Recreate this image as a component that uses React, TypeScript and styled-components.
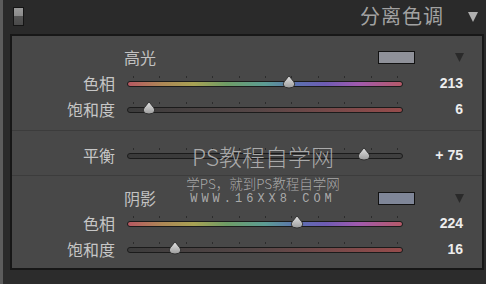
import React from "react"
import styled, { createGlobalStyle } from "styled-components"

const GlobalStyle = createGlobalStyle`
  html, body {
    margin: 0;
    padding: 0;
    background: #2a2a2a;
  }
  body {
    font-family: "Noto Sans CJK SC", "Noto Sans", sans-serif;
  }
`

const Frame = styled.div`
  position: relative;
  width: 483px;
  height: 284px;
  border-left: 3px solid #5c5c5c;
  background: #2a2a2a;
  display: flex;
  flex-direction: column;
  overflow: hidden;
`

const Header = styled.div`
  height: 34px;
  display: flex;
  align-items: center;
  padding: 0 7px 0 10px;
  box-sizing: border-box;
`

const Toggle = styled.div`
  width: 9px;
  height: 17px;
  border: 1px solid #151515;
  background: linear-gradient(#9a9a9a 0, #8a8a8a 50%, #555 50%, #4a4a4a 100%);
  margin-top: -1px;
`

const Title = styled.div`
  margin-left: auto;
  font-size: 20px;
  color: #a2a2a2;
  letter-spacing: 1px;
  line-height: 1;
  margin-top: -2px;
`

const Caret = styled.svg`
  display: block;
  margin-left: 24px;
  margin-right: 1px;
`

const Panel = styled.div`
  margin: 0 2px 0 7px;
  height: 236px;
  box-sizing: border-box;
  border: 2px solid #171717;
  background: #484848;
  display: flex;
  flex-direction: column;
`

const Section = styled.div<{ $top: number; $h: number; $last?: boolean }>`
  height: ${(p) => p.$h}px;
  box-sizing: border-box;
  padding-top: ${(p) => p.$top}px;
  border-bottom: ${(p) => (p.$last ? "none" : "1px solid #3c3c3c")};
`

const GroupHead = styled.div<{ $h: number }>`
  height: ${(p) => p.$h}px;
  display: flex;
  align-items: center;
  padding: 0 18px 0 112px;
`

const GroupName = styled.div`
  font-size: 16px;
  color: #c2c2c2;
  line-height: 1;
`

const Swatch = styled.div<{ $color: string }>`
  margin-left: auto;
  width: 35px;
  height: 11px;
  border: 1px solid #121212;
  background: ${(p) => p.$color};
`

const GroupCaret = styled.svg`
  display: block;
  margin-left: 40px;
`

const Row = styled.div`
  height: 26px;
  display: grid;
  grid-template-columns: 115px 276px 60px;
  align-items: center;
`

const Label = styled.div`
  text-align: right;
  padding-right: 12px;
  font-size: 16px;
  color: #c6c6c6;
  line-height: 1;
`

const SliderBox = styled.div`
  position: relative;
  height: 26px;
`

const Track = styled.div<{ $bg: string }>`
  position: absolute;
  left: 0;
  right: 0;
  top: 11px;
  height: 4px;
  border: 1px solid #1b1b1b;
  border-radius: 4px;
  background: ${(p) => p.$bg};
`

const Tick = styled.span`
  position: absolute;
  top: 6px;
  width: 1px;
  height: 2px;
  background: #2c2c2c;
`

const Thumb = styled.svg`
  position: absolute;
  top: 5px;
  margin-left: -7px;
`

const Value = styled.div`
  text-align: right;
  font-family: "Liberation Sans", Arial, sans-serif;
  font-weight: bold;
  font-size: 14px;
  color: #ededed;
  line-height: 1;
`

const Watermark = styled.div`
  position: absolute;
  left: 176px;
  top: 141px;
  width: 168px;
  text-align: center;
  color: rgba(190, 190, 190, 0.85);
  pointer-events: none;
`

const MarkBig = styled.div`
  font-size: 23px;
  line-height: 30px;
  font-weight: 300;
`

const MarkLine = styled.div`
  margin-top: 4px;
  font-size: 13.5px;
  line-height: 16px;
  font-weight: 300;
`

const MarkUrl = styled.div`
  font-family: "Liberation Mono", monospace;
  font-size: 12px;
  line-height: 16px;
  letter-spacing: 4px;
`

const Bottom = styled.div`
  flex: 1;
  background: #2c2c2c;
`

const HUE =
  "linear-gradient(90deg, #b65862 0%, #ae8656 12%, #a8a254 24%, #6e9c66 36%, #5c9c94 50%, #5c70b0 62%, #6e5cb4 72%, #a05aae 84%, #b65a68 100%)"
const SAT = "linear-gradient(90deg, #3c3c3c 0%, #544646 45%, #964c4c 100%)"
const BAL = "linear-gradient(90deg, #3a3a3a, #404040)"

type SliderProps = { label: string; bg: string; pos: number; value: string }

const Slider = ({ label, bg, pos, value }: SliderProps) => {
  const ticks = Array.from({ length: 11 }, (_, i) => 6 + i * 26.4)
  return (
    <Row>
      <Label>{label}</Label>
      <SliderBox>
        {ticks.map((x) => (
          <Tick key={x} style={{ left: x }} />
        ))}
        <Track $bg={bg} />
        <Thumb width="14" height="14" viewBox="0 0 14 14" style={{ left: 6 + pos * 264 }}>
          <defs>
            <linearGradient id="tg" x1="0" y1="0" x2="0" y2="1">
              <stop offset="0" stopColor="#e4e4e4" />
              <stop offset="1" stopColor="#9c9c9c" />
            </linearGradient>
          </defs>
          <path
            d="M7 0.8 L11.5 6.5 Q13 8 12.6 10 Q11.8 13 7 13 Q2.2 13 1.4 10 Q1 8 2.5 6.5 Z"
            fill="url(#tg)"
            stroke="#2a2a2a"
            strokeWidth="0.9"
          />
        </Thumb>
      </SliderBox>
      <Value>{value}</Value>
    </Row>
  )
}

const App = () => (
  <>
    <GlobalStyle />
    <Frame>
      <Header>
        <Toggle />
        <Title>分离色调</Title>
        <Caret width="10" height="10" viewBox="0 0 9 9">
          <path d="M0 0 H9 L4.5 9 Z" fill="#b0b0b0" />
        </Caret>
      </Header>
      <Panel>
        <Section $top={8} $h={95}>
          <GroupHead $h={26}>
            <GroupName>高光</GroupName>
            <Swatch $color="#8f9199" />
            <GroupCaret width="9" height="9" viewBox="0 0 9 9">
              <path d="M0 0 H9 L4.5 9 Z" fill="#2a2a2a" />
            </GroupCaret>
          </GroupHead>
          <Slider label="色相" bg={HUE} pos={213 / 360} value="213" />
          <Slider label="饱和度" bg={SAT} pos={0.06} value="6" />
        </Section>
        <Section $top={11} $h={45}>
          <Slider label="平衡" bg={BAL} pos={0.875} value="+ 75" />
        </Section>
        <Section $top={10} $h={92} $last>
          <GroupHead $h={24}>
            <GroupName>阴影</GroupName>
            <Swatch $color="#7f8698" />
            <GroupCaret width="9" height="9" viewBox="0 0 9 9">
              <path d="M0 0 H9 L4.5 9 Z" fill="#2a2a2a" />
            </GroupCaret>
          </GroupHead>
          <Slider label="色相" bg={HUE} pos={224 / 360} value="224" />
          <Slider label="饱和度" bg={SAT} pos={0.16} value="16" />
        </Section>
      </Panel>
      <Bottom />
      <Watermark>
        <MarkBig>PS教程自学网</MarkBig>
        <MarkLine>学PS，就到PS教程自学网</MarkLine>
        <MarkUrl>WWW.16XX8.COM</MarkUrl>
      </Watermark>
    </Frame>
  </>
)

export default App
